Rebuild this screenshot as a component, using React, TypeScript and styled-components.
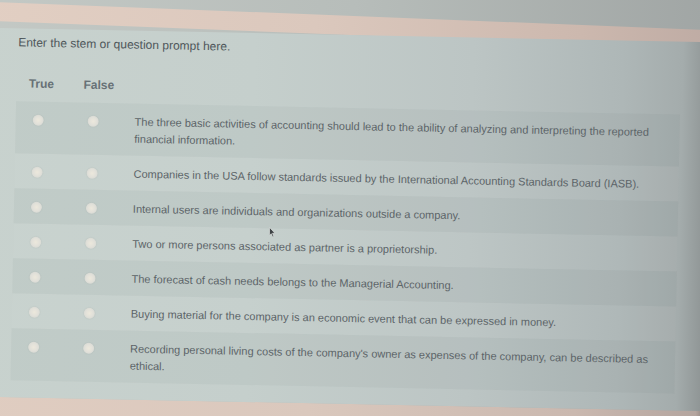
import React from 'react'
import styled, { createGlobalStyle } from 'styled-components'

const GlobalStyle = createGlobalStyle`
  html, body {
    margin: 0;
    padding: 0;
    overflow: hidden;
    background: #bcc4c1;
  }
  body {
    font-family: 'Liberation Sans', Arial, sans-serif;
  }
`

const Viewport = styled.div`
  width: 700px;
  height: 416px;
  overflow: hidden;
`

// the photo is taken slightly askew, so the whole screen is turned a little
const Scene = styled.div`
  width: 760px;
  height: 480px;
  margin: -30px 0 0 -30px;
  display: flex;
  flex-direction: column;
  transform: rotate(1.15deg);
  transform-origin: 380px 238px;
  background: linear-gradient(90deg, #c4c9c5 0%, #b7bdba 50%, #9fa4a3 100%);
`

const TopStrip = styled.div`
  height: 46px;
  flex-shrink: 0;
`

const PeachBand = styled.div`
  height: 19px;
  flex-shrink: 0;
  transform: rotate(1.1deg);
  background: linear-gradient(90deg, #e2cfc3 0%, #dbc8bd 45%, #ccb8ae 80%, #bca9a2 100%);
`

const Panel = styled.div`
  position: relative;
  height: 369px;
  flex-shrink: 0;
  padding: 6px 0 0 44px;
  box-sizing: border-box;
  background: linear-gradient(
    90deg,
    #c8d2ce 0px,
    #c5cfcc 280px,
    #bcc5c4 500px,
    #aeb7b7 650px,
    #a4acac 710px,
    #8f9595 735px,
    #7f8484 760px
  );
`

const Prompt = styled.div`
  margin-left: 1px;
  font-size: 12px;
  line-height: 16px;
  color: #4f575b;
`

const Grid = styled.div`
  display: grid;
  grid-template-columns: 44px 67px 1fr;
  width: 664px;
`

const HeaderRow = styled(Grid)`
  margin-top: 26px;
  margin-bottom: 11px;
`

const HeaderCell = styled.div<{ $shift: number }>`
  justify-self: center;
  font-size: 12px;
  line-height: 14px;
  font-weight: bold;
  color: #687176;
  transform: translateX(${(p) => p.$shift}px);
`

const Row = styled(Grid)<{ $shaded: boolean }>`
  align-items: start;
  padding: 10px 0 8px;
  background: ${(p) =>
    p.$shaded ? 'rgba(70, 96, 96, 0.05)' : 'rgba(255, 255, 255, 0.025)'};
`

const RadioCell = styled.div`
  display: flex;
  justify-content: center;
  height: 17px;
  align-items: center;
`

const Radio = styled.span`
  width: 11px;
  height: 11px;
  border-radius: 50%;
  background: radial-gradient(circle at 50% 50%, #ece8dc 0%, #e1e0d9 50%, #ccd2ce 100%);
  box-shadow: 0 0 1px rgba(140, 150, 146, 0.5);
`

const Statement = styled.div`
  padding: 0 13px 0 8px;
  font-size: 11px;
  line-height: 17px;
  color: #5c6468;
`

const Cursor = styled.svg`
  position: absolute;
  left: 299px;
  top: 194px;
  width: 7px;
  height: 10px;
`

const BottomBand = styled.div`
  flex: 1;
  background: linear-gradient(90deg, #e0cdc1 0%, #dac8bd 45%, #cab8af 80%, #b4a59f 96%, #2a2a2a 100%);
`

const statements = [
  'The three basic activities of accounting should lead to the ability of analyzing and interpreting the reported financial information.',
  'Companies in the USA follow standards issued by the International Accounting Standards Board (IASB).',
  'Internal users are individuals and organizations outside a company.',
  'Two or more persons associated as partner is a proprietorship.',
  'The forecast of cash needs belongs to the Managerial Accounting.',
  'Buying material for the company is an economic event that can be expressed in money.',
  "Recording personal living costs of the company's owner as expenses of the company, can be described as ethical.",
]

export default function App() {
  return (
    <Viewport>
      <GlobalStyle />
      <Scene>
        <TopStrip />
        <PeachBand />
        <Panel>
          <Prompt>Enter the stem or question prompt here.</Prompt>
          <HeaderRow>
            <HeaderCell $shift={3}>True</HeaderCell>
            <HeaderCell $shift={5}>False</HeaderCell>
          </HeaderRow>
          {statements.map((text, i) => (
            <Row key={i} $shaded={i % 2 === 0}>
              <RadioCell>
                <Radio />
              </RadioCell>
              <RadioCell>
                <Radio />
              </RadioCell>
              <Statement>{text}</Statement>
            </Row>
          ))}
          <Cursor viewBox="0 0 7 10">
            <path d="M1 0 L1 8 L2.8 6.3 L4.2 9.5 L5.4 9 L4 5.8 L6.5 5.8 Z" fill="#3d4244" stroke="#e8ebe9" strokeWidth="0.6" />
          </Cursor>
        </Panel>
        <BottomBand />
      </Scene>
    </Viewport>
  )
}
